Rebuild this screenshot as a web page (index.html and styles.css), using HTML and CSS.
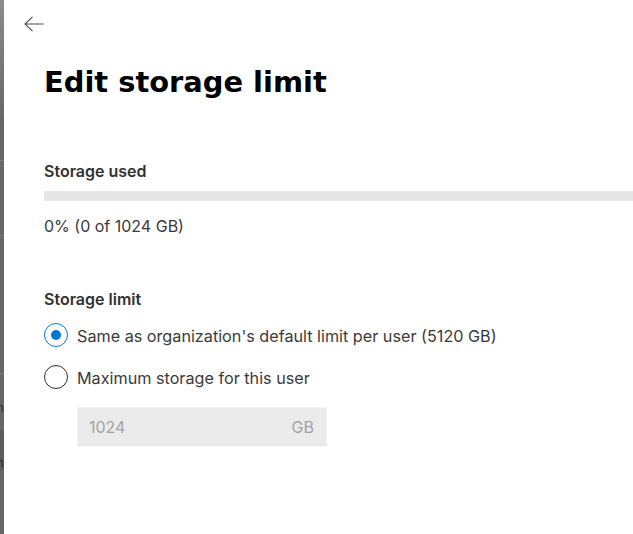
FILE: index.html
```html
<!DOCTYPE html>
<html lang="en">
<head>
<meta charset="utf-8">
<title>Edit storage limit</title>
<link rel="stylesheet" href="styles.css">
</head>
<body>
<div class="page">
  <div class="backdrop">
    <div class="bd-top"></div>
    <div class="bd-line l1"></div>
    <div class="bd-line l2"></div>
    <div class="bd-line l3"></div>
    <div class="bd-glyph g1">n</div>
    <div class="bd-band"></div>
    <div class="bd-glyph g2">n</div>
  </div>
  <main class="panel">
    <div class="panel-head">
      <button class="back" aria-label="Back">
        <svg width="20" height="16" viewBox="0 0 20 16"><path d="M19.5 8H1 M8.5 0.8L1 8L8.5 15.2" fill="none" stroke="#505050" stroke-width="1.1"/></svg>
      </button>
    </div>
    <div class="content">
      <h1 class="title">Edit storage limit</h1>
      <section class="used">
        <div class="label">Storage used</div>
        <div class="bar"><div class="bar-fill" style="width:0%"></div></div>
        <div class="used-text">0% (0 of 1024 GB)</div>
      </section>
      <section class="limit">
        <div class="label">Storage limit</div>
        <div class="options">
          <label class="option">
            <span class="radio checked"><span class="dot"></span></span>
            <span class="option-text">Same as organization's default limit per user (5120 GB)</span>
          </label>
          <label class="option">
            <span class="radio"></span>
            <span class="option-text">Maximum storage for this user</span>
          </label>
        </div>
        <div class="field">
          <span class="field-value">1024</span>
          <span class="field-suffix">GB</span>
        </div>
      </section>
    </div>
  </main>
</div>
</body>
</html>
```

FILE: styles.css
```css
html, body {
  margin: 0;
  padding: 0;
  height: 100%;
  background: #ffffff;
}
body {
  font-family: Inter, "Open Sans", sans-serif;
  color: #323130;
  overflow: hidden;
}
.page {
  display: flex;
  height: 534px;
}
.backdrop {
  width: 4px;
  flex: none;
  background: #676767;
  position: relative;
  overflow: hidden;
}
.bd-top {
  position: absolute;
  left: 0; top: 0;
  width: 4px; height: 120px;
  background: linear-gradient(#8c8c8c, #676767);
}
.bd-line {
  position: absolute;
  left: 0;
  width: 4px; height: 1px;
  background: #7c7c7c;
}
.l1 { top: 160px; }
.l2 { top: 235px; }
.l3 { top: 373px; }
.bd-band {
  position: absolute;
  left: 0; top: 430px;
  width: 4px; height: 40px;
  background: #5c5c5c;
}
.bd-glyph {
  position: absolute;
  left: -4px;
  width: 8px;
  font-size: 13px;
  line-height: 13px;
  color: #2a2a2a;
  font-family: "Open Sans", sans-serif;
  z-index: 1;
}
.g1 { top: 401px; }
.g2 { top: 456px; }
.panel {
  flex: 1;
  overflow: hidden;
  background: #ffffff;
}
.panel-head {
  padding: 16px 0 0 20px;
  height: 20px;
}
.back {
  border: 0;
  background: none;
  padding: 0;
  width: 20px;
  height: 16px;
  display: block;
}
.back svg { display: block; }
.content {
  padding-left: 40px;
}
.title {
  font-family: "DejaVu Sans", Inter, sans-serif;
  font-size: 28.9px;
  font-weight: 700;
  color: #000;
  margin: 26px 0 0 0;
  line-height: 40px;
}
.used {
  margin-top: 58px;
}
.label {
  font-size: 16px;
  font-weight: 600;
  line-height: 22px;
  color: #323130;
}
.bar {
  margin-top: 9px;
  height: 10px;
  background: #e6e6e6;
  width: 1000px;
}
.bar-fill {
  height: 100%;
  background: #0078d4;
}
.used-text {
  margin-top: 14px;
  font-size: 16px;
  line-height: 22px;
  color: #3b3a39;
}
.limit {
  margin-top: 51px;
}
.options {
  display: flex;
  flex-direction: column;
  gap: 18px;
  margin-top: 13px;
}
.option {
  display: flex;
  align-items: center;
  gap: 9px;
  height: 24px;
  font-size: 16.2px;
  color: #3b3a39;
}
.option-text {
  line-height: 24px;
  padding-top: 2px;
}
.radio {
  width: 24px;
  height: 24px;
  box-sizing: border-box;
  border: 1px solid #323130;
  border-radius: 50%;
  display: flex;
  align-items: center;
  justify-content: center;
  flex: none;
}
.radio.checked {
  border-color: #0078d4;
}
.dot {
  width: 10px;
  height: 10px;
  border-radius: 50%;
  background: #0078d4;
}
.field {
  margin: 18px 0 0 33px;
  width: 250px;
  height: 39px;
  box-sizing: border-box;
  background: #ebebeb;
  border: 1px solid #f2f2f2;
  border-bottom-color: #e2e2e2;
  display: flex;
  align-items: center;
  justify-content: space-between;
  padding: 0 12px 0 11px;
  font-size: 16px;
  color: #a3a3a3;
}
```
